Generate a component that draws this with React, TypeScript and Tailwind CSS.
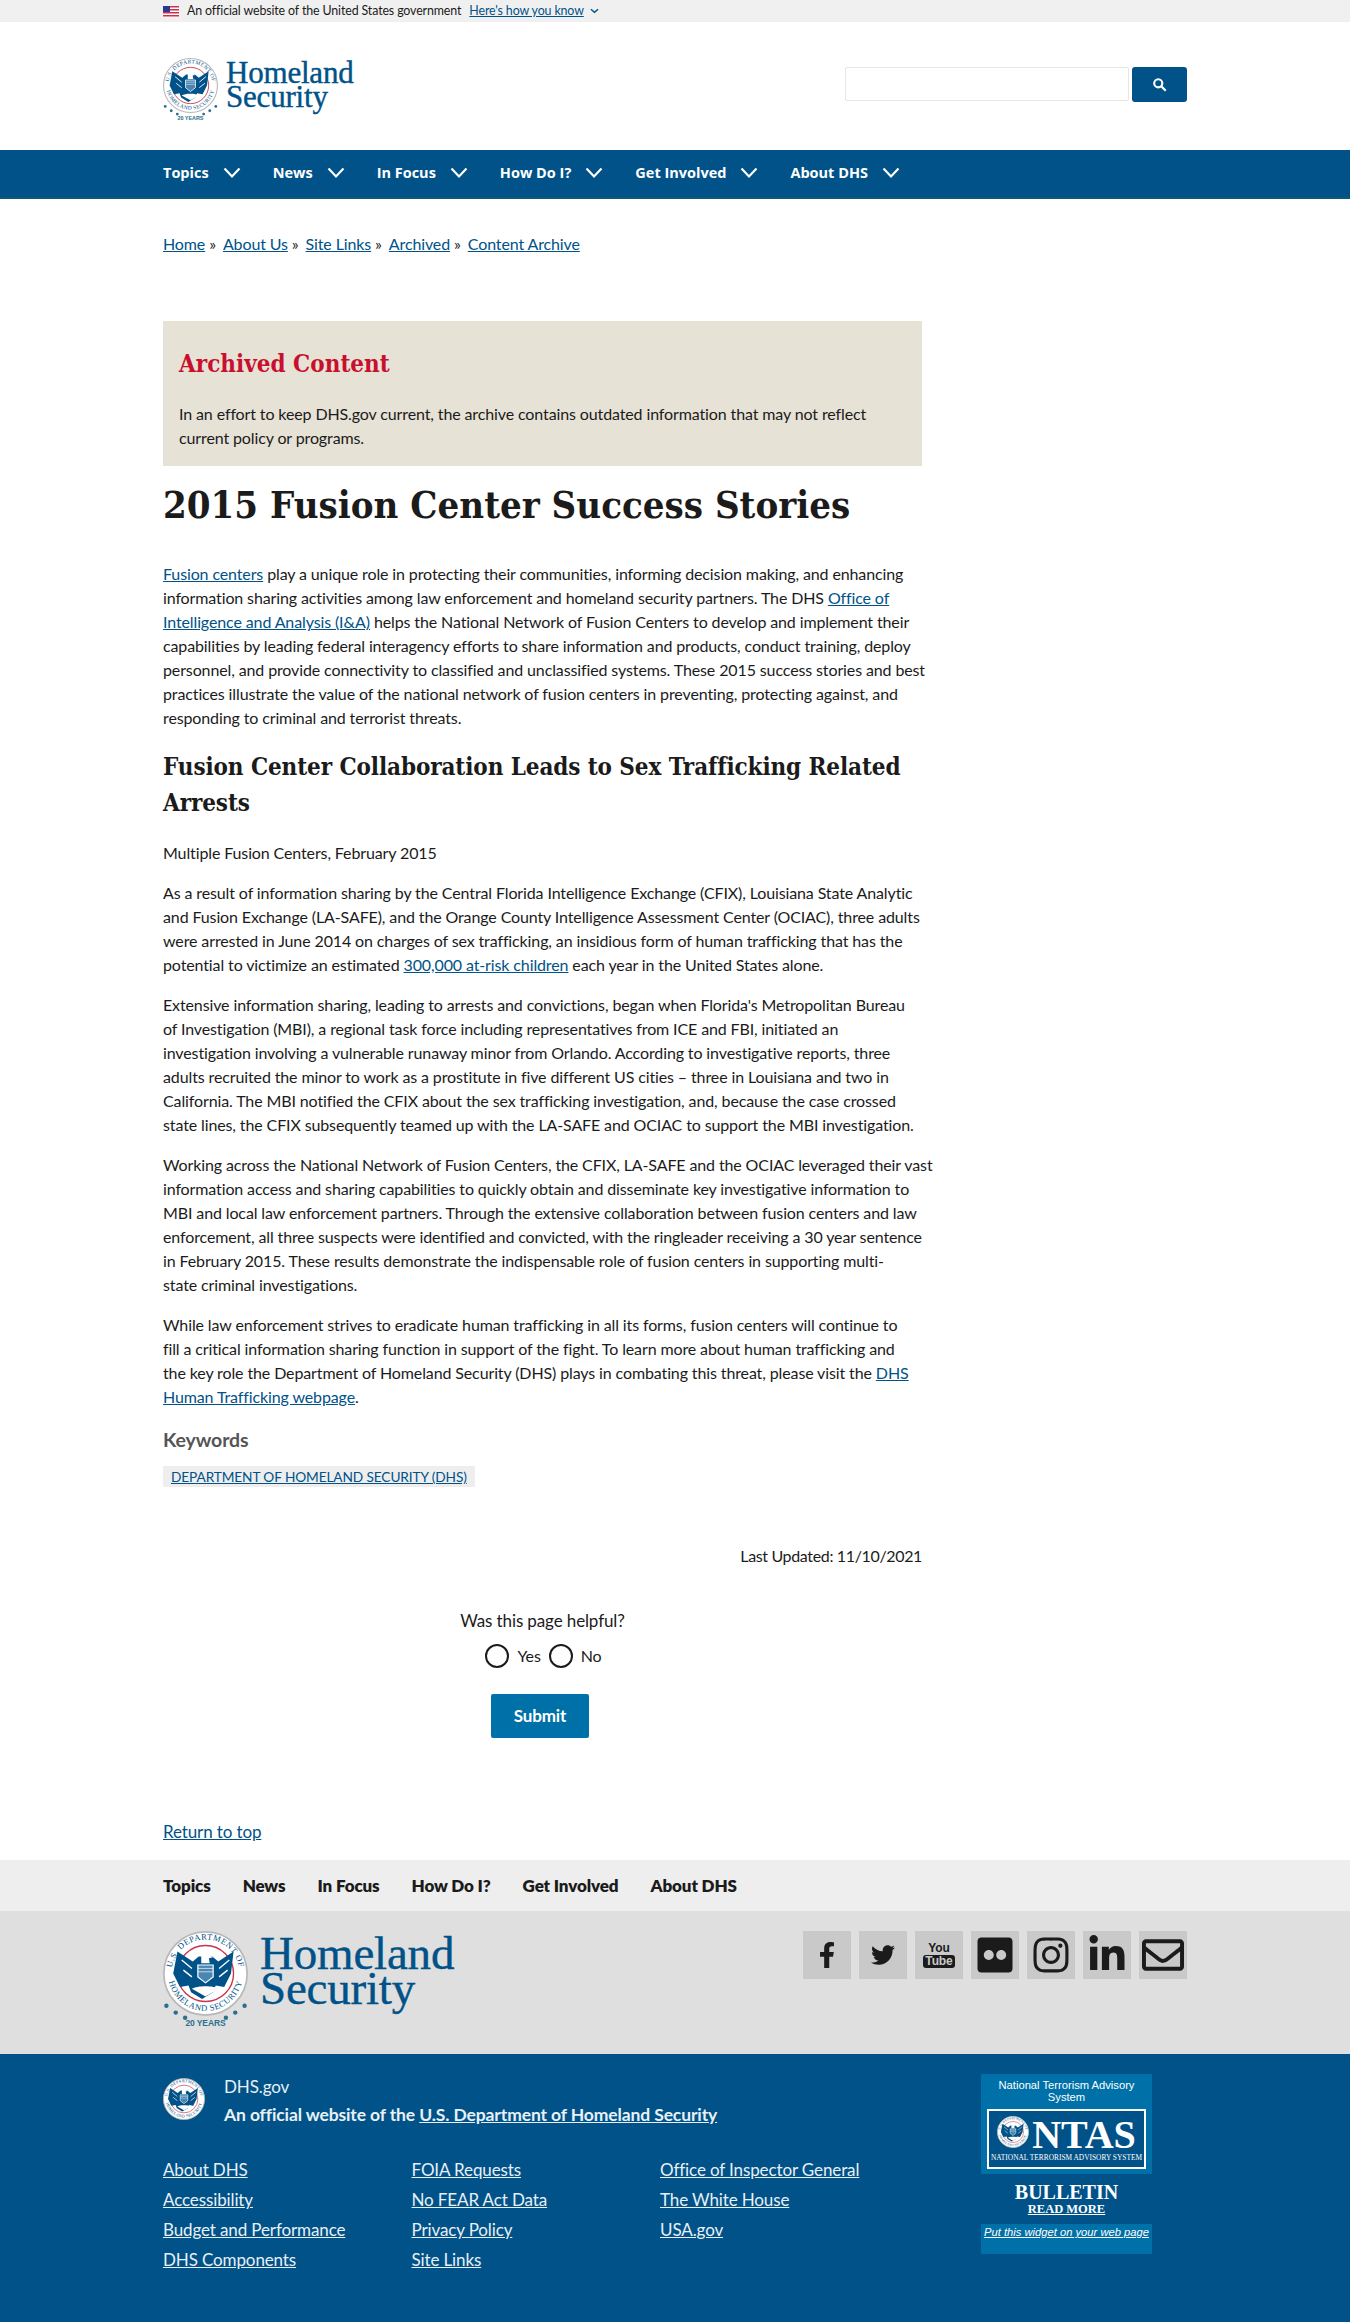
import { FaFacebookF, FaTwitter, FaFlickr, FaInstagram, FaLinkedinIn, FaRegEnvelope } from "react-icons/fa";

const sans = "font-['Lato','Noto_Sans',sans-serif]";
const serif = "font-['DejaVu_Serif_Condensed','DejaVu_Serif',serif]";
const link = "text-[#005288] underline";

function Chevron() {
  return (
    <svg viewBox="0 0 18 12" className="h-3 w-[18px]" fill="none" stroke="currentColor" strokeWidth="2.2">
      <path d="M1.5 1.5 9 9.5l7.5-8" />
    </svg>
  );
}

function Seal({ size, years = false, id }: { size: number; years?: boolean; id: string }) {
  return (
    <svg viewBox="0 0 100 116" width={size} height={(size * 116) / 100} className="shrink-0">
      <defs>
        <path id={`${id}-top`} d="M10 50a40 40 0 0 1 80 0" />
        <path id={`${id}-bottom`} d="M6 50a44 44 0 0 0 88 0" />
      </defs>
      <circle cx="50" cy="50" r="49" fill="#fff" stroke="#b8b8b8" strokeWidth="2" />
      <circle cx="50" cy="50" r="33" fill="#fff" stroke="#c8324a" strokeWidth="1.6" />
      <g fontFamily="Liberation Serif" fontSize="10" fill="#005288">
        <text letterSpacing="0.6">
          <textPath href={`#${id}-top`} startOffset="50%" textAnchor="middle">U.S. DEPARTMENT OF</textPath>
        </text>
        <text letterSpacing="0.6">
          <textPath href={`#${id}-bottom`} startOffset="50%" textAnchor="middle">HOMELAND SECURITY</textPath>
        </text>
      </g>
      <path d="M17 24 35 36 42 30h16l7 6 18-12-3 26-8 16-10-2-3 8-13 8-13-8-3-8-10 2-8-16Z" fill="#005288" />
      <path d="M22 34l12 10M24 46l10 8M78 34 66 44M76 46l-10 8" stroke="#fff" strokeWidth="1.6" />
      <path d="M45 26c4-3 9-1 10 3l4 2-5 1 1 6H45z" fill="#fff" />
      <path d="M41 40h18v14l-9 7-9-7z" fill="#4a86b4" stroke="#fff" strokeWidth="1.4" />
      <path d="M41 44h18M41 48h18" stroke="#fff" strokeWidth="0.8" />
      <path d="M34 68c6-4 26-4 32 0l-16 9z" fill="#fff" />
      {years && (
        <g fill="#2b6f8f">
          <circle cx="4" cy="88" r="2.6" />
          <circle cx="15" cy="96" r="2.6" />
          <circle cx="26" cy="102" r="2.6" />
          <circle cx="74" cy="102" r="2.6" />
          <circle cx="85" cy="96" r="2.6" />
          <circle cx="96" cy="88" r="2.6" />
          <text x="50" y="112" textAnchor="middle" fontSize="10" fontWeight="700" fontFamily="Liberation Sans">20 YEARS</text>
        </g>
      )}
    </svg>
  );
}

function Wordmark({ cls }: { cls: string }) {
  return (
    <div className={`font-['Liberation_Serif',serif] text-[#005288] [-webkit-text-stroke:0.4px_#005288] ${cls}`}>
      <div>Homeland</div>
      <div>Security</div>
    </div>
  );
}

function Flag() {
  return (
    <svg viewBox="0 0 16 11" className="h-[11px] w-4">
      <rect width="16" height="11" fill="#fff" />
      <path d="M0 0h16v1.5H0zM0 3h16v1.5H0zM0 6h16v1.5H0zM0 9h16v1.5H0z" fill="#c8324a" />
      <rect width="7" height="6" fill="#2a3b8f" />
    </svg>
  );
}

function SocialBox({ children }: { children: React.ReactNode }) {
  return <div className="flex h-12 w-12 items-center justify-center bg-[#c9c9c9] text-[#1b1b1b]">{children}</div>;
}

const navItems = ["Topics", "News", "In Focus", "How Do I?", "Get Involved", "About DHS"];

const footerCols = [
  ["About DHS", "Accessibility", "Budget and Performance", "DHS Components"],
  ["FOIA Requests", "No FEAR Act Data", "Privacy Policy", "Site Links"],
  ["Office of Inspector General", "The White House", "USA.gov"],
];

export default function App() {
  return (
    <div className={`h-[2322px] overflow-hidden whitespace-nowrap bg-white text-[16px] leading-6 tracking-[-0.12px] text-[#1b1b1b] ${sans}`}>
      <div className="h-[22px] bg-[#f0f0f0]">
        <div className="mx-[163px] flex h-full items-center text-[12.4px]">
          <Flag />
          <span className="ml-[8px]">An official website of the United States government</span>
          <span className="ml-2 text-[#005288] underline">Here's how you know</span>
          <svg viewBox="0 0 10 6" className="ml-[6px] h-[6px] w-[9px] text-[#005288]" fill="none" stroke="currentColor" strokeWidth="1.6">
            <path d="M1 1l4 3.5L9 1" />
          </svg>
        </div>
      </div>

      <header className="mx-[163px] flex h-[128px] items-center justify-between">
        <div className="flex items-center gap-[8px] pt-[7px]">
          <Seal size={55} years id="head" />
          <Wordmark cls="text-[31px] leading-[24px] tracking-[-0.2px] -mt-[8px]" />
        </div>
        <div className="-mt-[3px] flex gap-[3px]">
          <div className="h-[34px] w-[284px] rounded-[2px] border border-[#e6e6e6] bg-white" />
          <button className="flex h-[35px] w-[55px] items-center justify-center rounded-[3px] bg-[#005288] text-white">
            <svg viewBox="0 0 24 24" className="h-[15px] w-[15px]" fill="none" stroke="currentColor" strokeWidth="3.4">
              <circle cx="10" cy="10" r="6.5" />
              <path d="m15 15 7 7" />
            </svg>
          </button>
        </div>
      </header>

      <nav className="h-[49px] border-b-2 border-[#0a5a78] bg-[#005288] pb-[2px] font-['Open_Sans',sans-serif] text-[14.5px] font-bold tracking-normal text-white">
        <ul className="mx-[163px] flex h-full items-center gap-[32px]">
          {navItems.map((n) => (
            <li key={n} className="flex items-center gap-[14px]">
              {n}
              <Chevron />
            </li>
          ))}
        </ul>
      </nav>

      <main className="mx-[163px]">
        <div className="-mt-[1px] flex h-[92px] items-center">
          {["Home", "About Us", "Site Links", "Archived"].map((b) => (
            <span key={b} className="mr-[7px]">
              <span className={link}>{b}</span> »
            </span>
          ))}
          <span className={link}>Content Archive</span>
        </div>

        <div className="w-[759px]">
          <div className="mt-[31px] h-[145px] bg-[#e7e2d6] px-4 pt-[26px]">
            <h2 className={`text-[24px] font-bold leading-[34px] tracking-normal text-[#c8102e] ${serif}`}>Archived Content</h2>
            <p className="mt-[21px]">
              In an effort to keep DHS.gov current, the archive contains outdated information that may not reflect
              <br />
              current policy or programs.
            </p>
          </div>

          <h1 className={`mt-[14px] text-[38px] font-bold leading-[50px] tracking-normal ${serif}`}>2015 Fusion Center Success Stories</h1>

          <p className="mt-[32px]">
            <a className={link}>Fusion centers</a> play a unique role in protecting their communities, informing decision making, and enhancing
            <br />
            information sharing activities among law enforcement and homeland security partners. The DHS <a className={link}>Office of</a>
            <br />
            <a className={link}>Intelligence and Analysis (I&amp;A)</a> helps the National Network of Fusion Centers to develop and implement their
            <br />
            capabilities by leading federal interagency efforts to share information and products, conduct training, deploy
            <br />
            personnel, and provide connectivity to classified and unclassified systems. These 2015 success stories and best
            <br />
            practices illustrate the value of the national network of fusion centers in preventing, protecting against, and
            <br />
            responding to criminal and terrorist threats.
          </p>

          <h2 className={`mt-[19px] text-[24px] font-bold leading-[36px] tracking-[-0.1px] ${serif}`}>
            Fusion Center Collaboration Leads to Sex Trafficking Related
            <br />
            Arrests
          </h2>

          <p className="mt-[20px]">Multiple Fusion Centers, February 2015</p>
          <p className="mt-4">
            As a result of information sharing by the Central Florida Intelligence Exchange (CFIX), Louisiana State Analytic
            <br />
            and Fusion Exchange (LA-SAFE), and the Orange County Intelligence Assessment Center (OCIAC), three adults
            <br />
            were arrested in June 2014 on charges of sex trafficking, an insidious form of human trafficking that has the
            <br />
            potential to victimize an estimated <a className={link}>300,000 at-risk children</a> each year in the United States alone.
          </p>
          <p className="mt-4">
            Extensive information sharing, leading to arrests and convictions, began when Florida's Metropolitan Bureau
            <br />
            of Investigation (MBI), a regional task force including representatives from ICE and FBI, initiated an
            <br />
            investigation involving a vulnerable runaway minor from Orlando. According to investigative reports, three
            <br />
            adults recruited the minor to work as a prostitute in five different US cities – three in Louisiana and two in
            <br />
            California. The MBI notified the CFIX about the sex trafficking investigation, and, because the case crossed
            <br />
            state lines, the CFIX subsequently teamed up with the LA-SAFE and OCIAC to support the MBI investigation.
          </p>
          <p className="mt-4">
            Working across the National Network of Fusion Centers, the CFIX, LA-SAFE and the OCIAC leveraged their vast
            <br />
            information access and sharing capabilities to quickly obtain and disseminate key investigative information to
            <br />
            MBI and local law enforcement partners. Through the extensive collaboration between fusion centers and law
            <br />
            enforcement, all three suspects were identified and convicted, with the ringleader receiving a 30 year sentence
            <br />
            in February 2015. These results demonstrate the indispensable role of fusion centers in supporting multi-
            <br />
            state criminal investigations.
          </p>
          <p className="mt-4">
            While law enforcement strives to eradicate human trafficking in all its forms, fusion centers will continue to
            <br />
            fill a critical information sharing function in support of the fight. To learn more about human trafficking and
            <br />
            the key role the Department of Homeland Security (DHS) plays in combating this threat, please visit the <a className={link}>DHS</a>
            <br />
            <a className={link}>Human Trafficking webpage</a>.
          </p>

          <h3 className="mt-[17px] text-[19.5px] font-bold leading-7 text-[#555]">Keywords</h3>
          <div className="mt-[12px] flex">
            <a className={`bg-[#eeeeee] px-2 text-[13.7px] leading-[21px] ${link}`}>DEPARTMENT OF HOMELAND SECURITY (DHS)</a>
          </div>

          <p className="mt-[57px] text-right tracking-[-0.35px]">Last Updated: 11/10/2021</p>

          <div className="mt-[41px] flex flex-col items-center">
            <p className="text-[17px]">Was this page helpful?</p>
            <div className="mt-[11px] ml-[2px] flex items-center">
              <span className="h-6 w-6 rounded-full border-2 border-[#1b1b1b]" />
              <span className="ml-2">Yes</span>
              <span className="ml-2 h-6 w-6 rounded-full border-2 border-[#1b1b1b]" />
              <span className="ml-2">No</span>
            </div>
            <button className="mr-[5px] mt-[26px] h-[44px] w-[98px] rounded-[2px] bg-[#0071a8] text-[17px] font-bold text-white">Submit</button>
          </div>

          <p className="mt-[82px] text-[17px]">
            <a className={link}>Return to top</a>
          </p>
        </div>
      </main>

      <div className="mt-[16px] h-[51px] bg-[#eeeeee]">
        <ul className="mx-[163px] flex h-full items-center gap-[32px] text-[17px] font-extrabold">
          {navItems.map((n) => (
            <li key={n}>{n}</li>
          ))}
        </ul>
      </div>

      <div className="h-[143px] bg-[#dfdfdf]">
        <div className="mx-[163px] flex justify-between pt-[20px]">
          <div className="flex items-start gap-[12px]">
            <Seal size={85} years id="band" />
            <Wordmark cls="text-[47px] leading-[35px] tracking-[-0.2px] mt-[5px]" />
          </div>
          <div className="flex gap-2">
            <SocialBox>
              <FaFacebookF size={26} />
            </SocialBox>
            <SocialBox>
              <FaTwitter size={24} />
            </SocialBox>
            <SocialBox>
              <div className="flex flex-col items-center font-['Liberation_Sans_Narrow','Liberation_Sans',sans-serif] text-[12px] font-bold leading-[13px]">
                <span>You</span>
                <span className="rounded-[3px] bg-[#1b1b1b] px-[2px] text-[#c9c9c9]">Tube</span>
              </div>
            </SocialBox>
            <SocialBox>
              <FaFlickr size={40} />
            </SocialBox>
            <SocialBox>
              <FaInstagram size={40} />
            </SocialBox>
            <SocialBox>
              <FaLinkedinIn size={40} />
            </SocialBox>
            <SocialBox>
              <FaRegEnvelope size={42} />
            </SocialBox>
          </div>
        </div>
      </div>

      <footer className="h-[280px] bg-[#005288] text-[#e8f0f5]">
        <div className="mx-[163px] flex justify-between pt-[20px]">
          <div>
            <div className="flex gap-[19px]">
              <div className="mt-[4px]">
                <Seal size={42} id="foot" />
              </div>
              <div className="text-[17px] leading-[26px]">
                <div>DHS.gov</div>
                <div className="mt-[2px] text-[17.5px] font-bold">
                  An official website of the <a className="underline">U.S. Department of Homeland Security</a>
                </div>
              </div>
            </div>
            <div className="mt-[27px] flex text-[17px] leading-[30px]">
              {footerCols.map((c, i) => (
                <ul key={i} className="w-[248.5px]">
                  {c.map((l) => (
                    <li key={l} className="underline">
                      {l}
                    </li>
                  ))}
                </ul>
              ))}
            </div>
          </div>
          <div className="mr-[35px] w-[171px] font-['Liberation_Sans',sans-serif] tracking-normal text-white">
            <div className="h-[100px] whitespace-normal bg-[#0071a8] px-[6px] pt-[5px] text-center text-[11.2px] leading-3">
              National Terrorism Advisory System
              <div className="mt-[6px] flex h-[60px] flex-col items-center justify-center border-2 border-white bg-[#005288]">
                <div className="flex h-[36px] items-center gap-[3px]">
                  <Seal size={32} id="ntas" />
                  <span className="font-['Liberation_Serif',serif] text-[40px] font-bold leading-8">NTAS</span>
                </div>
                <span className="whitespace-nowrap font-['Liberation_Serif',serif] text-[7.4px] leading-[9px]">NATIONAL TERRORISM ADVISORY SYSTEM</span>
              </div>
            </div>
            <div className="mt-[8px] text-center font-['Liberation_Serif',serif] font-bold">
              <div className="text-[20px] leading-[20px]">BULLETIN</div>
              <div className="text-[12.5px] leading-[14px] underline">READ MORE</div>
            </div>
            <div className="mt-[8px] h-[30px] bg-[#0071a8] pt-[2px] text-center text-[11.2px] italic leading-3 underline">
              Put this widget on your web page
            </div>
          </div>
        </div>
      </footer>
    </div>
  );
}
